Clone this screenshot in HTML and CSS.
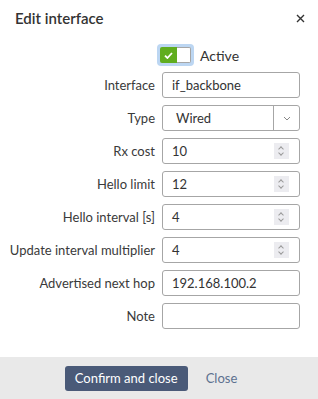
FILE: index.html
```html
<!DOCTYPE html>
<html lang="en">
  <head>
    <meta charset="utf-8" />
    <title>Edit interface</title>
    <link rel="stylesheet" href="styles.css">
  </head>
  <body>
    <div class="modal">
      <div class="modal-header">
        <h1 class="modal-title">Edit interface</h1>
        <button class="modal-close" aria-label="Close">
          <svg width="9" height="9" viewBox="0 0 9 9">
            <path d="M1 1 L8 8 M8 1 L1 8" stroke="#333" stroke-width="1.4" fill="none" />
          </svg>
        </button>
      </div>
      <div class="modal-body">
        <div class="form-row toggle-row">
          <span></span>
          <label class="switch">
            <span class="switch-track">
              <span class="switch-on">
                <svg width="9" height="7" viewBox="0 0 9 7">
                  <path d="M1 3.6 L3.4 6 L8 1" stroke="#fff" stroke-width="1.8" fill="none" />
                </svg>
              </span>
              <span class="switch-knob"></span>
            </span>
            <span class="switch-label">Active</span>
          </label>
        </div>
        <div class="form-row">
          <label class="form-label">Interface</label>
          <div class="field"><span class="field-text">if_backbone</span></div>
        </div>
        <div class="form-row">
          <label class="form-label">Type</label>
          <div class="field select">
            <span class="field-text">Wired</span>
            <span class="select-arrow">
              <svg width="8" height="5" viewBox="0 0 8 5">
                <path d="M1 1 L4 4 L7 1" stroke="#888" stroke-width="1" fill="none" />
              </svg>
            </span>
          </div>
        </div>
        <div class="form-row">
          <label class="form-label">Rx cost</label>
          <div class="field number"><span class="field-text">10</span><span class="spinner"></span></div>
        </div>
        <div class="form-row">
          <label class="form-label">Hello limit</label>
          <div class="field number"><span class="field-text">12</span><span class="spinner"></span></div>
        </div>
        <div class="form-row">
          <label class="form-label">Hello interval [s]</label>
          <div class="field number"><span class="field-text">4</span><span class="spinner"></span></div>
        </div>
        <div class="form-row">
          <label class="form-label">Update interval multiplier</label>
          <div class="field number"><span class="field-text">4</span><span class="spinner"></span></div>
        </div>
        <div class="form-row">
          <label class="form-label">Advertised next hop</label>
          <div class="field"><span class="field-text">192.168.100.2</span></div>
        </div>
        <div class="form-row">
          <label class="form-label">Note</label>
          <div class="field"></div>
        </div>
      </div>
      <div class="modal-footer">
        <button class="btn btn-primary">Confirm and close</button>
        <button class="btn btn-link">Close</button>
      </div>
    </div>
  </body>
</html>
```

FILE: styles.css
```css
body {
  margin: 0;
  font-family: Lato, "Liberation Sans", sans-serif;
  font-size: 13px;
  color: #333;
  background: #fff;
}

.modal {
  width: 318px;
  height: 399px;
  display: flex;
  flex-direction: column;
}

.modal-header {
  display: flex;
  align-items: center;
  justify-content: space-between;
  padding: 7px 13px 0 15px;
  height: 22px;
}

.modal-title {
  margin: 0;
  font-size: 15px;
  font-weight: 600;
  color: #333;
}

.modal-close {
  border: 0;
  background: none;
  padding: 0;
  width: 9px;
  height: 9px;
  display: flex;
}

.modal-body {
  flex: 1;
  display: flex;
  flex-direction: column;
  gap: 7px;
  padding: 15px 18px 0 8px;
}

.form-row {
  display: grid;
  grid-template-columns: 1fr 138px;
  column-gap: 7px;
  align-items: center;
  height: 26px;
}

.toggle-row {
  height: 21px;
}

.form-label {
  text-align: right;
  white-space: nowrap;
  color: #3a3a3a;
}

.field {
  box-sizing: border-box;
  height: 26px;
  border: 1px solid #a6a6a6;
  border-radius: 3px;
  display: flex;
  align-items: center;
  padding-left: 9px;
  background: #fff;
}

.select {
  padding-left: 13px;
}

.field-text {
  flex: 1;
}

.select-arrow {
  width: 25px;
  height: 100%;
  border-left: 1px solid #a6a6a6;
  display: flex;
  align-items: center;
  justify-content: center;
}

.spinner {
  width: 15px;
  height: 16px;
  margin-right: 10px;
  background: #ececf0;
  position: relative;
}

.spinner::before,
.spinner::after {
  content: "";
  position: absolute;
  left: 5px;
  width: 3px;
  height: 3px;
  border-left: 1px solid #999;
  border-top: 1px solid #999;
}

.spinner::before {
  top: 4px;
  transform: rotate(45deg);
}

.spinner::after {
  top: 8px;
  transform: rotate(225deg);
}

.switch {
  display: flex;
  align-items: center;
  gap: 6px;
  margin-left: -5px;
}

.switch-track {
  display: flex;
  box-sizing: border-box;
  width: 37px;
  height: 22px;
  padding: 3px;
  border-radius: 4px;
  background: #bcd6f2;
}

.switch-on {
  width: 17px;
  background: #60ad1f;
  border-radius: 2px 0 0 2px;
  display: flex;
  align-items: center;
  justify-content: center;
}

.switch-knob {
  flex: 1;
  background: #fff;
  border: 1px solid #a6a6a6;
  border-left: 0;
  border-radius: 0 2px 2px 0;
}

.switch-label {
  font-size: 14px;
}

.modal-footer {
  height: 42px;
  background: #e9e9e9;
  display: flex;
  align-items: center;
  justify-content: center;
  gap: 18px;
}

.btn {
  font-family: inherit;
  font-size: 13px;
  border: 0;
  background: none;
  padding: 0;
}

.btn-primary {
  width: 123px;
  height: 25px;
  border-radius: 3px;
  background: #4a5a78;
  color: #fff;
}

.btn-link {
  color: #5d7190;
  margin-right: 16px;
}
```
